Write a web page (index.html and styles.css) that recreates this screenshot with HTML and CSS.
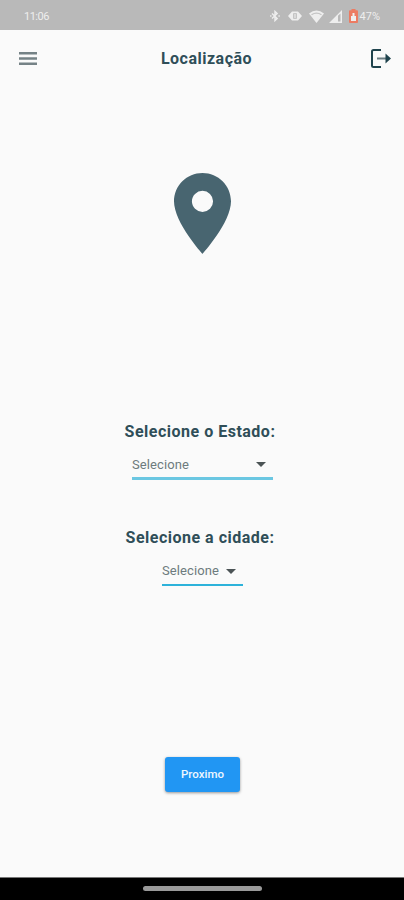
FILE: index.html
```html
<!DOCTYPE html>
<html lang="pt-BR">
<head>
<meta charset="utf-8">
<title>Localização</title>
<link rel="stylesheet" href="styles.css">
</head>
<body>
<div class="screen">
  <div class="status">
    <span class="clock">11:06</span>
    <div class="indicators">
      <svg class="bluetooth" width="12" height="12" viewBox="0 0 12 14" fill="none" stroke="currentColor" stroke-width="1.7"><path d="M2.500 4l6 6L6 12.300V1.700L8.500 4l-6 6"/><path d="M.3 7h1.600M10 7h1.600"/></svg>
      <svg class="vibrate" width="14" height="12" viewBox="0 0 14 12"><path fill="currentColor" fill-rule="evenodd" d="M0 6l4-4.500h6L14 6l-4 4.500H4zM5.200 3.200v5.600h3.600V3.200z"/><path fill="currentColor" d="M6.400 4h1.200v4H6.400z"/></svg>
      <svg class="wifi" width="15" height="13" viewBox="0 0 15 13"><path fill="currentColor" d="M0 3.500Q7.500-2.500 15 3.500L7.500 13z"/><path fill="none" stroke="#c4c4c4" stroke-width="1.200" d="M2.500 4.700Q7.500 1.500 12.500 4.700"/></svg>
      <svg class="signal" width="13" height="13" viewBox="0 0 13 13"><path fill="currentColor" fill-rule="evenodd" d="M0 13L13 0v13zM9 5.800v5.700h2.500V3.500z"/></svg>
      <svg class="battery" width="9" height="14" viewBox="0 0 9 14"><path fill="#ec7b62" d="M2.500 0h4v1.300H8q1 0 1 1V13q0 1-1 1H1q-1 0-1-1V2.300q0-1 1-1h1.500z"/><path fill="#eee" d="M2 7h1.500V4h2v3H7v5H2z"/></svg>
      <span class="percent">47%</span>
    </div>
  </div>
  <header class="appbar">
    <svg width="18" height="13" viewBox="0 0 18 13" fill="#758286"><path d="M0 0h18v2.500H0zM0 5.200h18v2.500H0zM0 10.400h18v2.500H0z"/></svg>
    <h1>Localização</h1>
    <svg width="20" height="19" viewBox="0 0 20 19" fill="none"><path stroke="#1f434d" stroke-width="2" d="M10 1H2.500Q1 1 1 2.500v14Q1 18 2.500 18H10"/><path stroke="#6b7d82" stroke-width="2" d="M6 9.500h9"/><path fill="#1f434d" d="M14.500 4.500l5.500 5-5.500 5z"/></svg>
  </header>
  <main>
    <svg class="pin" width="57" height="81" viewBox="5 2 14 20" preserveAspectRatio="none" fill="#486570"><path d="M12 2C8.130 2 5 5.130 5 9c0 5.250 7 13 7 13s7-7.750 7-13c0-3.870-3.130-7-7-7zm0 9.600a2.600 2.600 0 0 1 0-5.200 2.600 2.600 0 0 1 0 5.200z"/></svg>
    <section class="field state">
      <h2>Selecione o Estado:</h2>
      <div class="select"><span>Selecione</span><i class="caret"></i></div>
    </section>
    <section class="field city">
      <h2>Selecione a cidade:</h2>
      <div class="select"><span>Selecione</span><i class="caret"></i></div>
    </section>
    <button class="next" type="button">Proximo</button>
  </main>
  <footer class="navbar"><div class="handle"></div></footer>
</div>
</body>
</html>
```
FILE: styles.css
```css
* { box-sizing: border-box; }
body { margin: 0; font-family: Roboto, sans-serif; }
svg { display: block; flex: none; }
h1, h2 { margin: 0; color: #2f4e58; font-weight: 700; white-space: nowrap; }
.screen { display: flex; flex-direction: column; width: 404px; height: 900px; background: #fafafa; }
.status {
  display: flex; align-items: center; justify-content: space-between;
  height: 30px; padding: 2px 24px 0; background: #b9b9b9; color: #eee;
}
.clock { font-size: 11px; line-height: 14px; letter-spacing: -.5px; padding-top: 2px; }
.indicators { display: flex; align-items: center; }
.vibrate { margin-left: 7px; }
.wifi { margin-left: 7px; }
.signal { margin-left: 5px; }
.battery { margin-left: 7px; }
.percent { font-size: 11px; line-height: 14px; margin-left: 2px; padding-top: 2px; }
.appbar {
  display: flex; align-items: center; justify-content: space-between;
  height: 56px; padding: 0 13px 0 19px;
}
h1 { font-size: 16px; line-height: 20px; letter-spacing: .5px; padding: 2px 0 0 5px; }
main { flex: 1; display: flex; flex-direction: column; align-items: center; }
.pin { margin: 87px 0 0 1px; }
.field { display: flex; flex-direction: column; align-items: center; }
.state { margin-top: 168px; }
.city { margin-top: 48px; }
h2 { font-size: 16px; line-height: 20px; letter-spacing: .5px; margin-right: 4px; }
.select {
  display: flex; align-items: center; justify-content: space-between;
  height: 38px; padding: 10px 7px 0 0; margin-left: 1px;
  border-bottom: 3px solid #6bc7e2; color: #6d7b7d;
  font-size: 13px; line-height: 18px; letter-spacing: .1px;
}
.state .select { width: 141px; }
.city .select { width: 81px; border-bottom: 2px solid #2db2da; }
.caret { border: 5px solid transparent; border-top-color: #4b5355; border-bottom: 0; }
.next {
  width: 75px; height: 35px; margin: 171px 0 0 1px; padding: 0; border: 0; border-radius: 3px;
  background: #2196f3; color: #eef7ff; font: 500 11.5px/35px Roboto, sans-serif;
  box-shadow: 0 1px 3px rgba(0, 0, 0, .4);
}
.navbar {
  display: flex; justify-content: center; height: 23px; padding-top: 8px;
  background: #000; border-top: 1px solid #777;
}
.handle { width: 119px; height: 5px; border-radius: 3px; background: #999; }
```
